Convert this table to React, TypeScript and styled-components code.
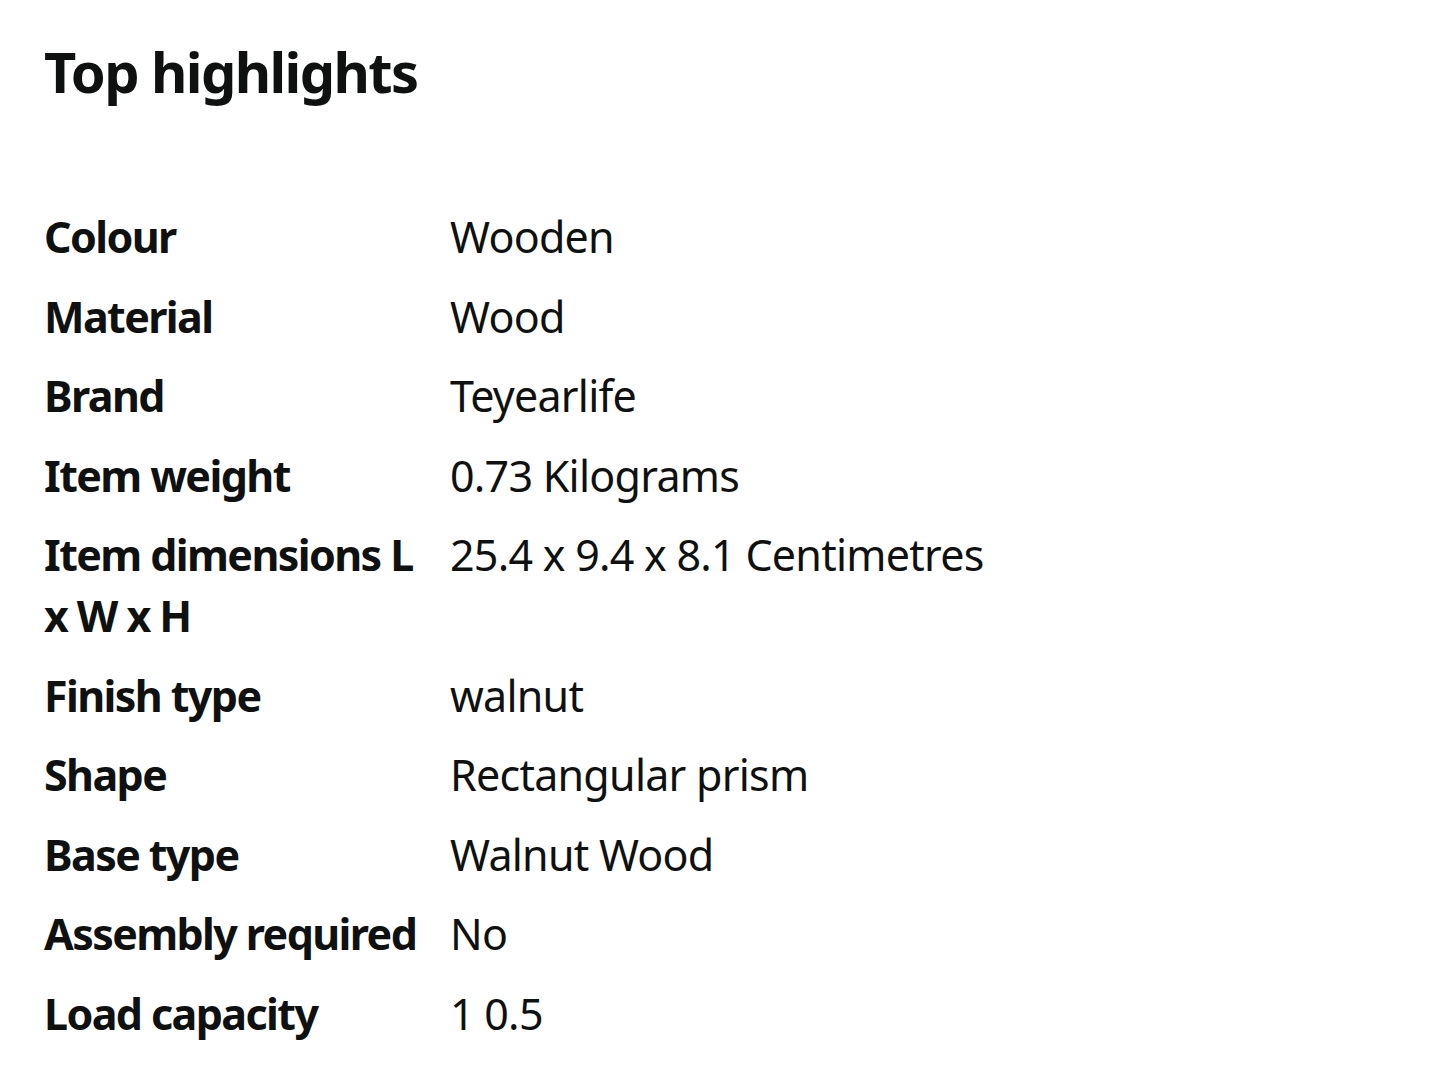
import React from "react";
import styled, { createGlobalStyle } from "styled-components";

const Global = createGlobalStyle`
  html, body { margin: 0; padding: 0; background: #ffffff; }
  body { font-family: "Noto Sans", "Open Sans", sans-serif; color: #0f1111; }
`;

const Page = styled.main`
  padding: 35px 44px 0 44px;
  display: flex;
  flex-direction: column;
`;

const Title = styled.h2`
  margin: 0;
  font-size: 56px;
  line-height: 72px;
  font-weight: 700;
  letter-spacing: -1.6px;
`;

const SpecTable = styled.div`
  margin-top: 90px;
  display: flex;
  flex-direction: column;
  width: 1000px;
`;

const SpecRow = styled.div`
  display: grid;
  grid-template-columns: 406px 1fr;
  padding: 9px 0 9.5px 0;
`;

const Label = styled.div`
  font-size: 43px;
  line-height: 61px;
  font-weight: 700;
  padding-right: 8px;
  letter-spacing: -1.6px;
`;

const Value = styled.div`
  font-size: 43px;
  line-height: 61px;
  font-weight: 400;
  letter-spacing: -0.75px;
`;

const specs: [string, string][] = [
  ["Colour", "Wooden"],
  ["Material", "Wood"],
  ["Brand", "Teyearlife"],
  ["Item weight", "0.73 Kilograms"],
  ["Item dimensions L x W x H", "25.4 x 9.4 x 8.1 Centimetres"],
  ["Finish type", "walnut"],
  ["Shape", "Rectangular prism"],
  ["Base type", "Walnut Wood"],
  ["Assembly required", "No"],
  ["Load capacity", "1 0.5"],
];

export default function App() {
  return (
    <>
      <Global />
      <Page>
        <Title>Top highlights</Title>
        <SpecTable>
          {specs.map(([k, v]) => (
            <SpecRow key={k}>
              <Label>{k}</Label>
              <Value>{v}</Value>
            </SpecRow>
          ))}
        </SpecTable>
      </Page>
    </>
  );
}
